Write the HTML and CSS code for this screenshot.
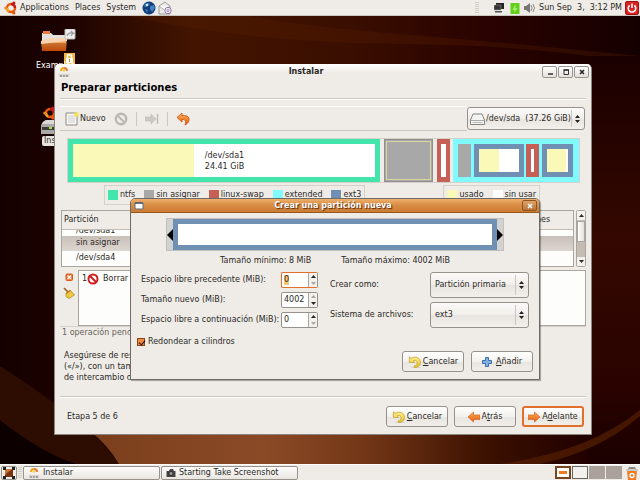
FILE: index.html
```
<!DOCTYPE html>
<html lang="es">
<head>
<meta charset="utf-8">
<title>Instalar</title>
<link rel="stylesheet" href="styles.css">
</head>
<body>
<svg class="defs" aria-hidden="true">
  <defs>
    <linearGradient id="gOrange" x1="0" y1="0" x2="0" y2="1"><stop offset="0" stop-color="#fbb25a"/><stop offset="1" stop-color="#e8590c"/></linearGradient>
    <linearGradient id="gYellow" x1="0" y1="0" x2="0" y2="1"><stop offset="0" stop-color="#fff08a"/><stop offset="1" stop-color="#e8c22a"/></linearGradient>
    <symbol id="installer" viewBox="0 0 12 12">
      <path d="M3 5a3 3 0 0 1 3-3" fill="none" stroke="#f5a623" stroke-width="2"/>
      <path d="M6 2a3 3 0 0 1 3 3" fill="none" stroke="#e8793c" stroke-width="2"/>
      <circle cx="6" cy="4.500" r="1.200" fill="#f7d43c"/>
      <path d="M1 8h10v3H1z" fill="#d5d2cd"/><path d="M2 10h8" stroke="#77736d" stroke-dasharray="2 1"/>
    </symbol>
    <symbol id="revert" viewBox="0 0 16 14">
      <ellipse cx="9" cy="13" rx="6" ry="1" fill="#d8d4cd"/>
      <path d="M1.500 1v6.500h6.300L5.800 5.600C8 4.300 10.500 5.500 10.500 8c0 2-1.400 3-3.500 3.500l.5 1.800c4-.3 6.800-2.300 6.800-5.800C14.300 2.500 8.500-.5 3.700 3z" fill="url(#gYellow)" stroke="#bd9a1c" stroke-width=".8"/>
    </symbol>
    <symbol id="combo" viewBox="0 0 5 8"><path d="M2.500 0 5 3H0zM2.500 8 0 5h5z" fill="#222"/></symbol>
    <symbol id="up" viewBox="0 0 5 3"><path d="M2.500 0 5 3H0z" fill="currentColor"/></symbol>
    <symbol id="down" viewBox="0 0 5 3"><path d="M2.500 3 0 0h5z" fill="currentColor"/></symbol>
    <symbol id="ubuntu" viewBox="0 0 14 14">
      <circle cx="7" cy="7" r="4" fill="none" stroke="#e8590c" stroke-width="2.400"/>
      <path d="M7 3a4 4 0 0 1 4 4" fill="none" stroke="#c01818" stroke-width="2.400"/>
      <path d="M5 10.500A4 4 0 0 1 3 7" fill="none" stroke="#f5a623" stroke-width="2.400"/>
      <circle cx="1.800" cy="7" r="1.600" fill="#f08a24"/><circle cx="9.800" cy="2" r="1.600" fill="#c01818"/><circle cx="9.800" cy="12" r="1.600" fill="#e8590c"/>
    </symbol>
  </defs>
</svg>

<div class="screen">
  <header class="panel panel-top">
    <nav class="menus">
      <svg class="i14" viewBox="0 0 14 14"><use href="#ubuntu"/></svg>
      <a href="#">Applications</a><a href="#">Places</a><a href="#">System</a>
      <svg class="i14" viewBox="0 0 14 14"><circle cx="7" cy="7" r="6.500" fill="#123f7c"/><path d="M3 3c2-1.500 4-1.500 5 0L6 5 4 6 2 5zM8 5l4-1 1 3-3 4-2-3zM3 8l3 1-1 3z" fill="#3f7fbf"/><circle cx="5" cy="4" r="1.200" fill="#cfe6fa"/></svg>
      <svg class="i14" viewBox="0 0 14 14"><path d="m1 5 6-4 5 4v8H1z" fill="#e9e9e7" stroke="#8b8b89" stroke-width=".8"/><path d="m1 5 5.500 4L12 5" fill="#fff" stroke="#9a9a98" stroke-width=".8"/><circle cx="10" cy="9.500" r="3.200" fill="#f2ecf8" stroke="#9176a8"/><circle cx="10" cy="9.500" r="1" fill="none" stroke="#9176a8" stroke-width=".8"/></svg>
    </nav>
    <div class="tray">
      <span class="grip"></span>
      <svg class="i10 net" viewBox="0 0 10 10"><path d="M2 0h8v6H2z" fill="#222"/><path d="M0 2h7v5H0z" fill="#333" stroke="#aaa" stroke-width=".5"/><path d="M1 8h7v1.500H1z" fill="#555"/></svg>
      <svg class="i12" viewBox="0 0 9 12"><path d="M0 1h9v11H0z" fill="#62cf1c"/><path d="m2 8 3-6v4h2l-3 5V8z" fill="#a5ec68"/></svg>
      <svg class="i12" viewBox="0 0 12 12"><path d="M0 4h2l4-3v10L2 8H0z" fill="#777"/><path d="M7 3q2 3 0 6M9 2q3 4 0 8" fill="none" stroke="#888"/></svg>
      <time>Sun Sep&nbsp; 3,&nbsp; 3:12 PM</time>
      <svg class="i14" viewBox="0 0 14 14"><rect x=".5" y=".5" width="13" height="13" rx="1.500" fill="#d92222" stroke="#a31212"/><path d="M4.600 4.300a3.800 3.800 0 1 0 4.800 0M7 2.500v4.500" fill="none" stroke="#fff" stroke-width="1.600"/></svg>
    </div>
  </header>

  <main class="desktop">
    <svg class="wallpaper" viewBox="0 0 640 448" preserveAspectRatio="none" aria-hidden="true">
      <defs>
        <linearGradient id="wTop" x1="0" x2="1" y1="0" y2="0"><stop offset="0" stop-color="#150000"/><stop offset=".1" stop-color="#1c0200"/><stop offset=".3" stop-color="#431500"/><stop offset=".55" stop-color="#3a0e00"/><stop offset=".75" stop-color="#2a0300"/><stop offset="1" stop-color="#150000"/></linearGradient>
        <linearGradient id="wLow" x1="0" x2="1" y1="0" y2="0"><stop offset="0" stop-color="#7b3f1d"/><stop offset=".35" stop-color="#8a4a26"/><stop offset=".55" stop-color="#733717"/><stop offset=".8" stop-color="#3b1000"/><stop offset="1" stop-color="#200000"/></linearGradient>
        <linearGradient id="wRight" x1="0" x2="0" y1="0" y2="1"><stop offset="0" stop-color="#1a0000"/><stop offset=".45" stop-color="#340800"/><stop offset=".8" stop-color="#2a0300"/><stop offset="1" stop-color="#1a0000"/></linearGradient>
      </defs>
      <rect width="640" height="448" fill="url(#wTop)"/>
      <path d="M130 0Q240 26 400 28T640 50V40Q500 26 400 18T250 0z" fill="#5a2000" opacity=".3"/>
      <rect x="590" y="40" width="50" height="408" fill="url(#wRight)"/>
      <path d="M0 350Q40 375 90 415L120 448H0z" fill="#2d0d02"/>
      <path d="M0 404Q40 436 76 448H0z" fill="#0d0000"/>
      <path d="M90 415h500v33H119Q108 429 90 415z" fill="url(#wLow)"/>
      <path d="M500 448Q590 435 640 394V400Q600 435 540 448z" fill="#552000" opacity=".7"/>
    </svg>

    <div class="icon icon-examples">
      <svg viewBox="0 0 36 36"><path d="M2 4h9l2 2h13v8H2z" fill="#e5e1dc"/><path d="M3 2h7v3H3z" fill="#f3793a"/><path d="m1 12 10-3h16l-1 13H2z" fill="url(#gOrange)" opacity=".8"/><path d="m1 12 10-3h16v3L1 15z" fill="#fad3b0"/><rect x="25" y="0" width="10" height="10" rx="1" fill="#eee" stroke="#bbb"/><path d="M27 7q1-4 6-3l-2-2m2 2-2 3" fill="none" stroke="#999" stroke-width="1.300"/><path d="M24 24h11v11H24z" fill="#f3b643"/><path d="M26 29h7v5h-7z" fill="#fff"/><path d="M27.500 29v-3h4v3" fill="none" stroke="#fff" stroke-width="1.500"/><path d="M29.500 30v3" stroke="#d98d12"/></svg>
      <span>Examples</span>
    </div>
    <div class="icon icon-install">
      <svg viewBox="0 0 30 30"><use href="#ubuntu" x="2" y="0" width="16" height="14"/><path d="m3 16 3-2h20v14H1V19z" fill="#aaa9a7"/><path d="m3 16 3-2h20v4H2z" fill="#d9d8d6"/><path d="M2 21h24v3H2z" fill="#3c3d39"/><path d="M9 22h3" stroke="#a8e03a" stroke-width="2"/></svg>
      <span class="picked">Install</span>
    </div>

    <section class="window installer">
      <div class="titlebar">
        <svg class="i12" viewBox="0 0 12 12"><use href="#installer"/></svg>
        <h1>Instalar</h1>
        <div class="winbtns">
          <button type="button" aria-label="Minimizar"><svg viewBox="0 0 8 8"><path d="M2 6h5" stroke="#333" stroke-width="1.400"/></svg></button>
          <button type="button" aria-label="Maximizar"><svg viewBox="0 0 8 8"><path d="M2 2h4.500v4.500H2z" fill="none" stroke="#333"/><path d="M1.500 2h5.500" stroke="#333" stroke-width="1.500"/></svg></button>
          <button type="button" aria-label="Cerrar"><svg viewBox="0 0 8 8"><path d="m2 2 4 4m0-4L2 6" stroke="#222" stroke-width="1.500"/></svg></button>
        </div>
      </div>
      <div class="body">
        <h2>Preparar particiones</h2>
        <div class="toolrow">
          <div class="toolbar">
            <button type="button" class="tool"><svg class="i14" viewBox="0 0 14 14"><path d="M1 1h11v12H1z" fill="#f5f5f3" stroke="#8d8b88"/><path d="M3 3h7v8H3z" fill="#e2e3e1"/><circle cx="11.500" cy="2.500" r="2.300" fill="#f8e34e"/></svg>Nuevo</button>
            <button type="button" class="tool" aria-label="Eliminar" disabled><svg class="i14" viewBox="0 0 14 14"><circle cx="7" cy="7" r="5.200" fill="none" stroke="#bab6b1" stroke-width="2.400"/><path d="m4 4 6 6" stroke="#bab6b1" stroke-width="2"/></svg></button>
            <span class="vsep"></span>
            <button type="button" class="tool" aria-label="Redimensionar" disabled><svg class="i14" viewBox="0 0 14 14"><path d="M0 5h6V2l5 5-5 5V9H0z" fill="#cdc9c4" stroke="#bfbab4" stroke-width=".6"/><path d="M12.500 2v10" stroke="#bfbab4" stroke-width="1.500"/></svg></button>
            <span class="vsep"></span>
            <button type="button" class="tool" aria-label="Deshacer"><svg class="i14" viewBox="0 0 14 14"><path d="M6 1 1 5.500 6 10V7.500c3-.5 4.500 1.500 3 5.500 3-1.500 4.500-4 4-6.500C12.500 4 9.500 3.300 6 3.500z" fill="url(#gOrange)" stroke="#c9500a" stroke-width=".8"/></svg></button>
          </div>
          <div class="combo device">
            <svg class="disk" viewBox="0 0 15 12"><path d="M3 1h9l2.500 6v4.500H.5V7z" fill="#f3f3f2" stroke="#777" stroke-width=".9"/><path d="M.5 7.500h14" stroke="#aaa"/><path d="M2.500 9.500h10" stroke="#bbb"/></svg>
            <select aria-label="Dispositivo"><option>/dev/sda&nbsp; (37.26 GiB)</option></select>
            <svg class="arrows" viewBox="0 0 5 8"><use href="#combo"/></svg>
          </div>
        </div>

        <div class="disks">
          <div class="part ntfs"><div class="fill used"></div><div class="fill free info">/dev/sda1<br>24.41 GiB</div></div>
          <div class="part unalloc chosen"></div>
          <div class="part swap"><div class="fill free"></div></div>
          <div class="part extended">
            <div class="part unalloc"></div>
            <div class="part ext3 root"><div class="fill free"></div><div class="fill free"></div></div>
            <div class="part swap"><div class="fill free"></div></div>
            <div class="part ext3 home"><div class="fill used"></div><div class="fill free"></div></div>
          </div>
        </div>

        <div class="legends">
          <ul class="legend"><li class="k-ntfs">ntfs</li><li class="k-un">sin asignar</li><li class="k-swap">linux-swap</li><li class="k-ext">extended</li><li class="k-ext3">ext3</li></ul>
          <ul class="legend"><li class="k-used">usado</li><li class="k-free">sin usar</li></ul>
        </div>

        <div class="list">
          <div class="tablebox">
            <table>
              <thead><tr><th>Partición</th><th class="opt">Opciones</th></tr></thead>
              <tbody>
                <tr><td><div class="scrolled">/dev/sda1</div></td><td></td></tr>
                <tr class="selected"><td>sin asignar</td><td></td></tr>
                <tr><td>/dev/sda4</td><td></td></tr>
              </tbody>
            </table>
          </div>
          <div class="scrollbar">
            <button type="button" aria-label="Subir"><svg viewBox="0 0 5 3"><use href="#up"/></svg></button>
            <span class="thumb"></span>
            <button type="button" aria-label="Bajar"><svg viewBox="0 0 5 3"><use href="#down"/></svg></button>
          </div>
        </div>

        <div class="ops">
          <div class="opbtns">
            <button type="button" aria-label="Cerrar operaciones"><svg class="i10" viewBox="0 0 10 10"><rect x="2" y="2" width="6.500" height="6.500" rx="1" fill="#ee7a3c" stroke="#d85a1c"/><path d="m3.500 3.500 3.500 3.500m0-3.500L3.500 7" stroke="#fff" stroke-width="1.300"/></svg></button>
            <button type="button" aria-label="Limpiar operaciones"><svg class="i12" viewBox="0 0 12 12"><path d="m1 1 4 4" stroke="#9b5a1c" stroke-width="1.600"/><path d="m3 6 4-3 4.500 5L6 11.500 3 9.500z" fill="#efc93c" stroke="#a5811a" stroke-width=".7"/><path d="m3.500 6.500 4-3" stroke="#c0601a"/></svg></button>
          </div>
          <ol class="oplist"><li>1<svg class="i12" viewBox="0 0 12 12"><circle cx="6" cy="6" r="4.500" fill="#fff" stroke="#cf1d1d" stroke-width="2"/><path d="m3 3 6 6" stroke="#cf1d1d" stroke-width="2"/></svg><span>Borrar</span></li></ol>
        </div>
        <p class="status">1 operación pendiente</p>
        <p class="hint">Asegúrese de reservar espacio<br>(«/»), con un tamaño mínimo<br>de intercambio de 256 MB</p>

        <footer class="wizard">
          <span class="step">Etapa 5 de 6</span>
          <button type="button" class="btn"><svg class="i14" viewBox="0 0 16 14"><use href="#revert"/></svg><span><u>C</u>ancelar</span></button>
          <button type="button" class="btn"><svg class="i12" viewBox="0 0 12 12"><path d="M0 6 5.500 1v3H12v4.500H5.500V11z" fill="url(#gOrange)" stroke="#d0662a" stroke-width=".7"/></svg><span>A<u>t</u>rás</span></button>
          <button type="button" class="btn default"><svg class="i12" viewBox="0 0 12 12"><path d="M12 6 6.500 1v3H0v4.500h6.500V11z" fill="url(#gOrange)" stroke="#d0662a" stroke-width=".7"/></svg><span>A<u>d</u>elante</span></button>
        </footer>
      </div>
    </section>

    <section class="window dialog" role="dialog" aria-label="Crear una partición nueva">
      <div class="titlebar">
        <svg class="i10" viewBox="0 0 10 10"><path d="M1 2h8v6H1z" fill="#fff" stroke="#5b6b7c"/><path d="M1 2h8" stroke="#4b5b6c" stroke-width="1.500"/></svg>
        <h1>Crear una partición nueva</h1>
        <div class="winbtns"><button type="button" aria-label="Cerrar"><svg viewBox="0 0 8 8"><path d="m2 2 4 4m0-4L2 6" stroke="#fff" stroke-width="1.500"/></svg></button></div>
      </div>
      <form class="dbody">
        <div class="resizer">
          <svg viewBox="0 0 6 12"><path d="M6 0v12L0 6z"/></svg>
          <div class="span"></div>
          <svg viewBox="0 0 6 12"><path d="M0 0v12l6-6z"/></svg>
        </div>
        <div class="limits"><span>Tamaño mínimo: 8 MiB</span><span>Tamaño máximo: 4002 MiB</span></div>
        <div class="fields">
          <div class="left">
            <label for="before">Espacio libre precedente (MiB):</label>
            <div class="spin focus"><input id="before" type="text" inputmode="numeric" value="0"><div class="steps"><button type="button" aria-label="Más"><svg viewBox="0 0 5 3"><use href="#up"/></svg></button><button type="button" aria-label="Menos" disabled><svg viewBox="0 0 5 3"><use href="#down"/></svg></button></div></div>
            <label for="size">Tamaño nuevo (MiB):</label>
            <div class="spin"><input id="size" type="text" inputmode="numeric" value="4002"><div class="steps"><button type="button" aria-label="Más" disabled><svg viewBox="0 0 5 3"><use href="#up"/></svg></button><button type="button" aria-label="Menos"><svg viewBox="0 0 5 3"><use href="#down"/></svg></button></div></div>
            <label for="after">Espacio libre a continuación (MiB):</label>
            <div class="spin"><input id="after" type="text" inputmode="numeric" value="0"><div class="steps"><button type="button" aria-label="Más"><svg viewBox="0 0 5 3"><use href="#up"/></svg></button><button type="button" aria-label="Menos" disabled><svg viewBox="0 0 5 3"><use href="#down"/></svg></button></div></div>
          </div>
          <div class="right">
            <label for="kind">Crear como:</label>
            <div class="combo"><select id="kind"><option>Partición primaria</option></select><svg class="arrows" viewBox="0 0 5 8"><use href="#combo"/></svg></div>
            <label for="fs">Sistema de archivos:</label>
            <div class="combo"><select id="fs"><option>ext3</option></select><svg class="arrows" viewBox="0 0 5 8"><use href="#combo"/></svg></div>
          </div>
        </div>
        <div class="round"><input type="checkbox" id="round" checked><label for="round">Redondear a cilindros</label></div>
        <div class="actions">
          <button type="button" class="btn"><svg class="i14" viewBox="0 0 16 14"><use href="#revert"/></svg><span><u>C</u>ancelar</span></button>
          <button type="button" class="btn add"><svg class="i10" viewBox="0 0 10 10"><path d="M3.500.5h3v3h3v3h-3v3h-3v-3h-3v-3h3z" fill="#7fb0e0" stroke="#3a70b0"/></svg><span><u>A</u>ñadir</span></button>
        </div>
      </form>
    </section>
  </main>

  <footer class="panel panel-bottom">
    <button type="button" class="show" aria-label="Mostrar el escritorio"><svg class="i12" viewBox="0 0 12 12"><path d="M2 2h8v8H2z" fill="#c9783a"/><path d="M2 8 5 5l5-3v8H2z" fill="#7a3510"/><path d="M0 0h3v3H0zM9 0h3v3H9zM0 9h3v3H0zM9 9h3v3H9z" fill="#222"/></svg></button>
    <span class="grip"></span>
    <button type="button" class="task"><svg class="i12" viewBox="0 0 12 12"><use href="#installer"/></svg>Instalar</button>
    <button type="button" class="task"><svg class="i10" viewBox="0 0 10 10"><path d="M1 3h2l1-2h3l1 2h1.500v6H.5V3z" fill="#444"/><circle cx="5" cy="5.500" r="2" fill="#999" stroke="#222" stroke-width=".8"/></svg>Starting Take Screenshot</button>
    <div class="pager"><span class="ws current"><i></i></span><span class="ws shown"></span><span class="ws"></span><span class="ws"></span></div>
    <svg class="i14" viewBox="0 0 14 14"><path d="M2 4h10l-1 10H3z" fill="#ee7a22"/><path d="M1 3h12v2H1z" fill="#c9c7c4"/><path d="m3 3 1-2h6l1 2z" fill="#8b8a87"/><circle cx="7" cy="9.500" r="2" fill="none" stroke="#fff" stroke-width="1.400"/></svg>
  </footer>
</div>
</body>
</html>
```
FILE: styles.css
```
* { box-sizing: border-box; }
html, body { height: 100%; margin: 0; }
body { font: 8px/10px "DejaVu Sans", sans-serif; color: #2b2926; background: #1a0000; }
h1, h2, p, ul, ol { margin: 0; padding: 0; font-weight: inherit; font-size: inherit; list-style: none; }
button, input, select { font: inherit; color: inherit; margin: 0; padding: 0; border: 0; background: none; outline: 0; }
a { color: inherit; text-decoration: none; }
svg { display: block; flex: none; }
.defs { position: absolute; width: 0; height: 0; }
.i10 { width: 10px; height: 10px; }
.i12 { width: 12px; height: 12px; }
.i14 { width: 14px; height: 14px; }

.screen { display: flex; flex-direction: column; height: 100%; overflow: hidden; }
.panel { display: flex; align-items: center; flex: none; height: 16px; background: #efece7; }
.panel-top { justify-content: space-between; padding: 0 1px 0 4px; border-bottom: 1px solid #c9c4bc; }
.menus, .tray { display: flex; align-items: center; }
.menus { gap: 2px; }
.menus a { margin-right: 4px; }
.menus svg + a { margin-right: 4px; }
.tray { gap: 3px; }
.grip { width: 4px; height: 12px; background: repeating-linear-gradient(#d2cdc5 0 1px, transparent 1px 2px); }
.net { margin: 0 2px 0 12px; }

.desktop { position: relative; flex: 1; min-height: 0; overflow: hidden; }
.wallpaper { position: absolute; inset: 0; width: 100%; height: 100%; }
.icon { position: absolute; color: #fff; }
.icon-examples { left: 36px; top: 13px; }
.icon-examples svg { width: 36px; height: 36px; margin: 0 0 -4px 4px; }
.icon-install { left: 38px; top: 90px; }
.icon-install svg { width: 30px; height: 30px; margin-left: 2px; }
.picked { display: block; margin-left: 4px; padding: 0 2px; border-radius: 2px; background: #e8e4df; color: #333; }

.window { position: absolute; display: flex; flex-direction: column; background: #efece7; border: 1px solid #8a867f; border-radius: 5px 5px 0 0; overflow: hidden; }
.installer { inset: 48px 48px 29px 54px; border-top-color: #fff; }
.dialog { inset: 182px 100px 84px 130px; border-color: #6f6a63; box-shadow: 1px 1px 1px #0005; }
.titlebar { display: flex; align-items: center; flex: none; height: 13px; padding: 0 2px 0 3px; background: linear-gradient(#fff, #efece7 60%); }
.titlebar h1 { flex: 1; text-align: center; font-weight: bold; }
.winbtns { display: flex; gap: 1px; }
.winbtns button { display: flex; align-items: center; justify-content: center; width: 15px; height: 12px; border: 1px solid #9a958d; border-radius: 2px; background: linear-gradient(#fff, #e4e0da); }
.winbtns svg { width: 8px; height: 8px; }
.dialog .titlebar { height: 14px; color: #fff; text-shadow: 1px 1px 1px #50280a; border-bottom: 1px solid #99581d; background: linear-gradient(#edb06c, #d98d45 45%, #cd7c34); }
.dialog .winbtns button { height: 11px; background: linear-gradient(#dfa468, #b9743a); border-color: #8f5420; }

.body { display: flex; flex-direction: column; flex: 1; padding: 0 5px; }
h2 { padding: 4px 1px; font-size: 10px; line-height: 12px; font-weight: bold; color: #000; border-bottom: 1px solid #cbc6be; box-shadow: 0 1px #fff; }
.toolrow { display: flex; align-items: stretch; height: 25px; margin-top: 7px; }
.toolbar { display: flex; align-items: center; flex: 1; gap: 8px; padding-left: 5px; border-top: 1px solid #fff; border-bottom: 1px solid #cbc6be; }
.tool { display: flex; align-items: center; gap: 1px; }
.vsep { width: 1px; height: 14px; background: #cbc6be; }
.combo { position: relative; border: 1px solid #96918a; border-radius: 3px; background: linear-gradient(#fbfaf9, #f1eeea 50%, #e8e4df 51%, #f2f0ec); }
.combo select { display: block; width: 100%; height: 100%; appearance: none; padding-left: 4px; }
.combo::after { content: ""; position: absolute; top: 2px; bottom: 2px; right: 12px; width: 1px; background: #cbc6be; }
.arrows { position: absolute; right: 4px; top: 0; bottom: 0; margin: auto 0; width: 5px; height: 8px; pointer-events: none; }
.device { display: flex; align-items: center; width: 118px; height: 23px; margin: 1px 1px 0 0; padding-left: 2px; }
.disk { width: 15px; height: 12px; }
.device select { padding-left: 1px; flex: 1; }

.disks { display: flex; gap: 3px; height: 45px; margin: 7px 6px 0 7px; border: 1px solid #d5d1ca; }
.part { display: flex; flex: none; }
.ntfs { flex: 1; border: 5px solid #42e5ac; }
.ntfs .used { width: 40%; }
.fill { background: #fff; flex: 1; }
.used { background: #fbf9b8; flex: none; }
.info { padding: 6px 0 0 11px; line-height: 11px; }
.unalloc { background: #a8a8a8; }
.chosen { width: 49px; margin: 0 1px; border: 1px solid #8f8f8f; outline: 1px solid #d9d59c; outline-offset: -3px; }
.swap { width: 13px; border: 5px solid #c65f56; border-width: 5px 4px; }
.extended { width: 126px; padding: 5px; gap: 2px; background: #7ffbff; }
.extended .unalloc { width: 13px; margin-right: 1px; }
.extended .swap { border-width: 5px; }
.ext3 { border: 5px solid #7090b3; }
.root { width: 50px; }
.root .fill:first-child { background: #fbf9b8; }
.home { width: 31px; margin-left: 1px; }
.home .used { width: 19px; }

.legends { display: flex; justify-content: space-between; padding: 2px 46px 0 44px; }
.legend { display: flex; gap: 9px; height: 20px; padding: 0 3px; align-items: center; border: 1px solid #d5d1ca; }
.legend li { display: flex; align-items: center; gap: 2px; white-space: nowrap; }
.legend li::before { content: ""; width: 10px; height: 10px; background: var(--key); }
.k-ntfs { --key: #42e5ac; }
.k-un { --key: #a8a8a8; }
.k-swap { --key: #c65f56; }
.k-ext { --key: #7ffbff; }
.k-ext3 { --key: #7090b3; }
.k-used { --key: #fbf9b8; }
.k-free { --key: #fff; }

.list { display: flex; gap: 2px; height: 57px; margin: 5px 0 0 1px; }
.tablebox { flex: 1; overflow: hidden; border: 1px solid #aaa59d; background: #fdfdfb; }
table { width: 100%; border-collapse: collapse; }
th { height: 18px; padding: 0 2px; text-align: left; font-weight: normal; background: #efece7; border-bottom: 1px solid #c2bcb3; }
th.opt { width: 62px; }
td { height: 15px; padding: 0 0 0 14px; }
tr:first-child td { height: 6px; }
.scrolled { display: flex; align-items: flex-end; height: 6px; overflow: hidden; }
.selected td { background: linear-gradient(#c8bfb8, #ddd6d0); }
.scrollbar { display: flex; flex-direction: column; justify-content: space-between; width: 10px; border: 1px solid #aaa59d; border-radius: 2px; background: #c4bbb2; }
.scrollbar button { display: flex; align-items: center; justify-content: center; height: 9px; background: #f3f1ed; }
.scrollbar svg, .steps svg { width: 5px; height: 3px; }
.thumb { height: 21px; margin-bottom: 14px; border: 1px solid #aaa59d; background: linear-gradient(90deg, #fff, #e4e0da); }

.ops { display: flex; margin-top: 3px; height: 56px; }
.opbtns { display: flex; flex-direction: column; align-items: center; gap: 5px; width: 18px; padding-top: 2px; }
.oplist { flex: 1; padding: 2px 3px; border: 1px solid #aaa59d; background: #fdfdfb; }
.oplist li { display: flex; align-items: center; }
.oplist span { margin-left: 4px; }
.status { padding: 1px 2px 0; color: #66625c; border-top: 1px solid #d5d1ca; }
.hint { padding: 12px 4px 0; line-height: 11px; }
.wizard { display: flex; align-items: center; gap: 6px; margin-top: auto; padding: 9px 2px 7px 7px; border-top: 1px solid #cbc6be; box-shadow: inset 0 1px #fff; }
.step { flex: 1; }
.btn { display: flex; align-items: center; justify-content: center; gap: 1px; width: 62px; height: 21px; border: 1px solid #96918a; border-radius: 3px; background: linear-gradient(#fff, #f3f1ed 50%, #e8e4df 52%, #f1eeea); }
.btn .i12 { margin-right: 1px; }
.default { border: 2px solid #e2702c; }
u { text-underline-offset: 1px; }

.dbody { display: flex; flex-direction: column; flex: 1; padding: 5px 5px 7px; }
.resizer { display: flex; align-items: center; height: 33px; margin: 0 30px; background: #d2d2d0; border: 1px solid #c2c0bc; }
.resizer svg { width: 6px; height: 12px; }
.span { flex: 1; height: 31px; border: 5px solid #7090b3; background: #fff; }
.limits { display: flex; justify-content: center; gap: 30px; padding: 5px 0 6px; }
.fields { display: flex; justify-content: space-between; padding: 0 5px; }
.left, .right { display: grid; align-items: center; gap: 4px; }
.left { grid-template-columns: 136px 37px; grid-auto-rows: 16px; }
.left label { white-space: nowrap; }
.right { grid-template-columns: 96px 99px; grid-auto-rows: 26px; }
.right .combo { height: 26px; }
.spin { display: flex; height: 16px; border: 1px solid #96918a; border-radius: 2px; background: #fff; overflow: hidden; }
.spin input { flex: 1; min-width: 0; padding-left: 2px; }
.focus { border-color: #e2702c #96918a #e2702c #e2702c; }
.focus input { background: linear-gradient(#f7c672, #f7c672) 2px 2px / 5px 10px no-repeat; }
.steps { display: flex; flex-direction: column; width: 9px; border-left: 1px solid #aaa59d; background: #f3f1ed; }
.steps button { display: flex; flex: 1; align-items: center; justify-content: center; }
.steps button:disabled { color: #aaa59d; }
.round { display: flex; align-items: center; gap: 3px; margin-top: 9px; padding-left: 1px; }
.round input { appearance: none; width: 8px; height: 8px; border: 1px solid #8a4512; background: #ee8a42; }
.round input::before { content: ""; display: block; width: 3px; height: 5px; margin-left: 2px; border: solid #221000; border-width: 0 1px 1px 0; transform: rotate(40deg); }
.actions { display: flex; justify-content: flex-end; gap: 7px; margin-top: auto; padding-right: 1px; }
.add { gap: 4px; }

.panel-bottom { gap: 1px; padding: 0 1px; border-top: 1px solid #fff; }
.show { display: flex; align-items: center; justify-content: center; width: 16px; height: 14px; border: 1px solid #96918a; border-radius: 2px; }
.task { display: flex; align-items: center; gap: 3px; flex: 0 1 137px; height: 14px; padding-left: 4px; border: 1px solid #96918a; border-radius: 2px; background: linear-gradient(#fdfcfb, #e9e6e1); white-space: nowrap; }
.pager { display: flex; gap: 1px; margin-left: auto; }
.pager + svg { margin-left: 2px; }
.ws { display: flex; width: 16px; height: 13px; background: #aaa29a; }
.current { border: 2px solid #7a4420; background: #fff; align-items: center; justify-content: center; }
.current i { width: 8px; height: 3px; background: #ee7a22; }
.shown { border: 1px solid #6c6861; background: #f3f1ed; }
```
